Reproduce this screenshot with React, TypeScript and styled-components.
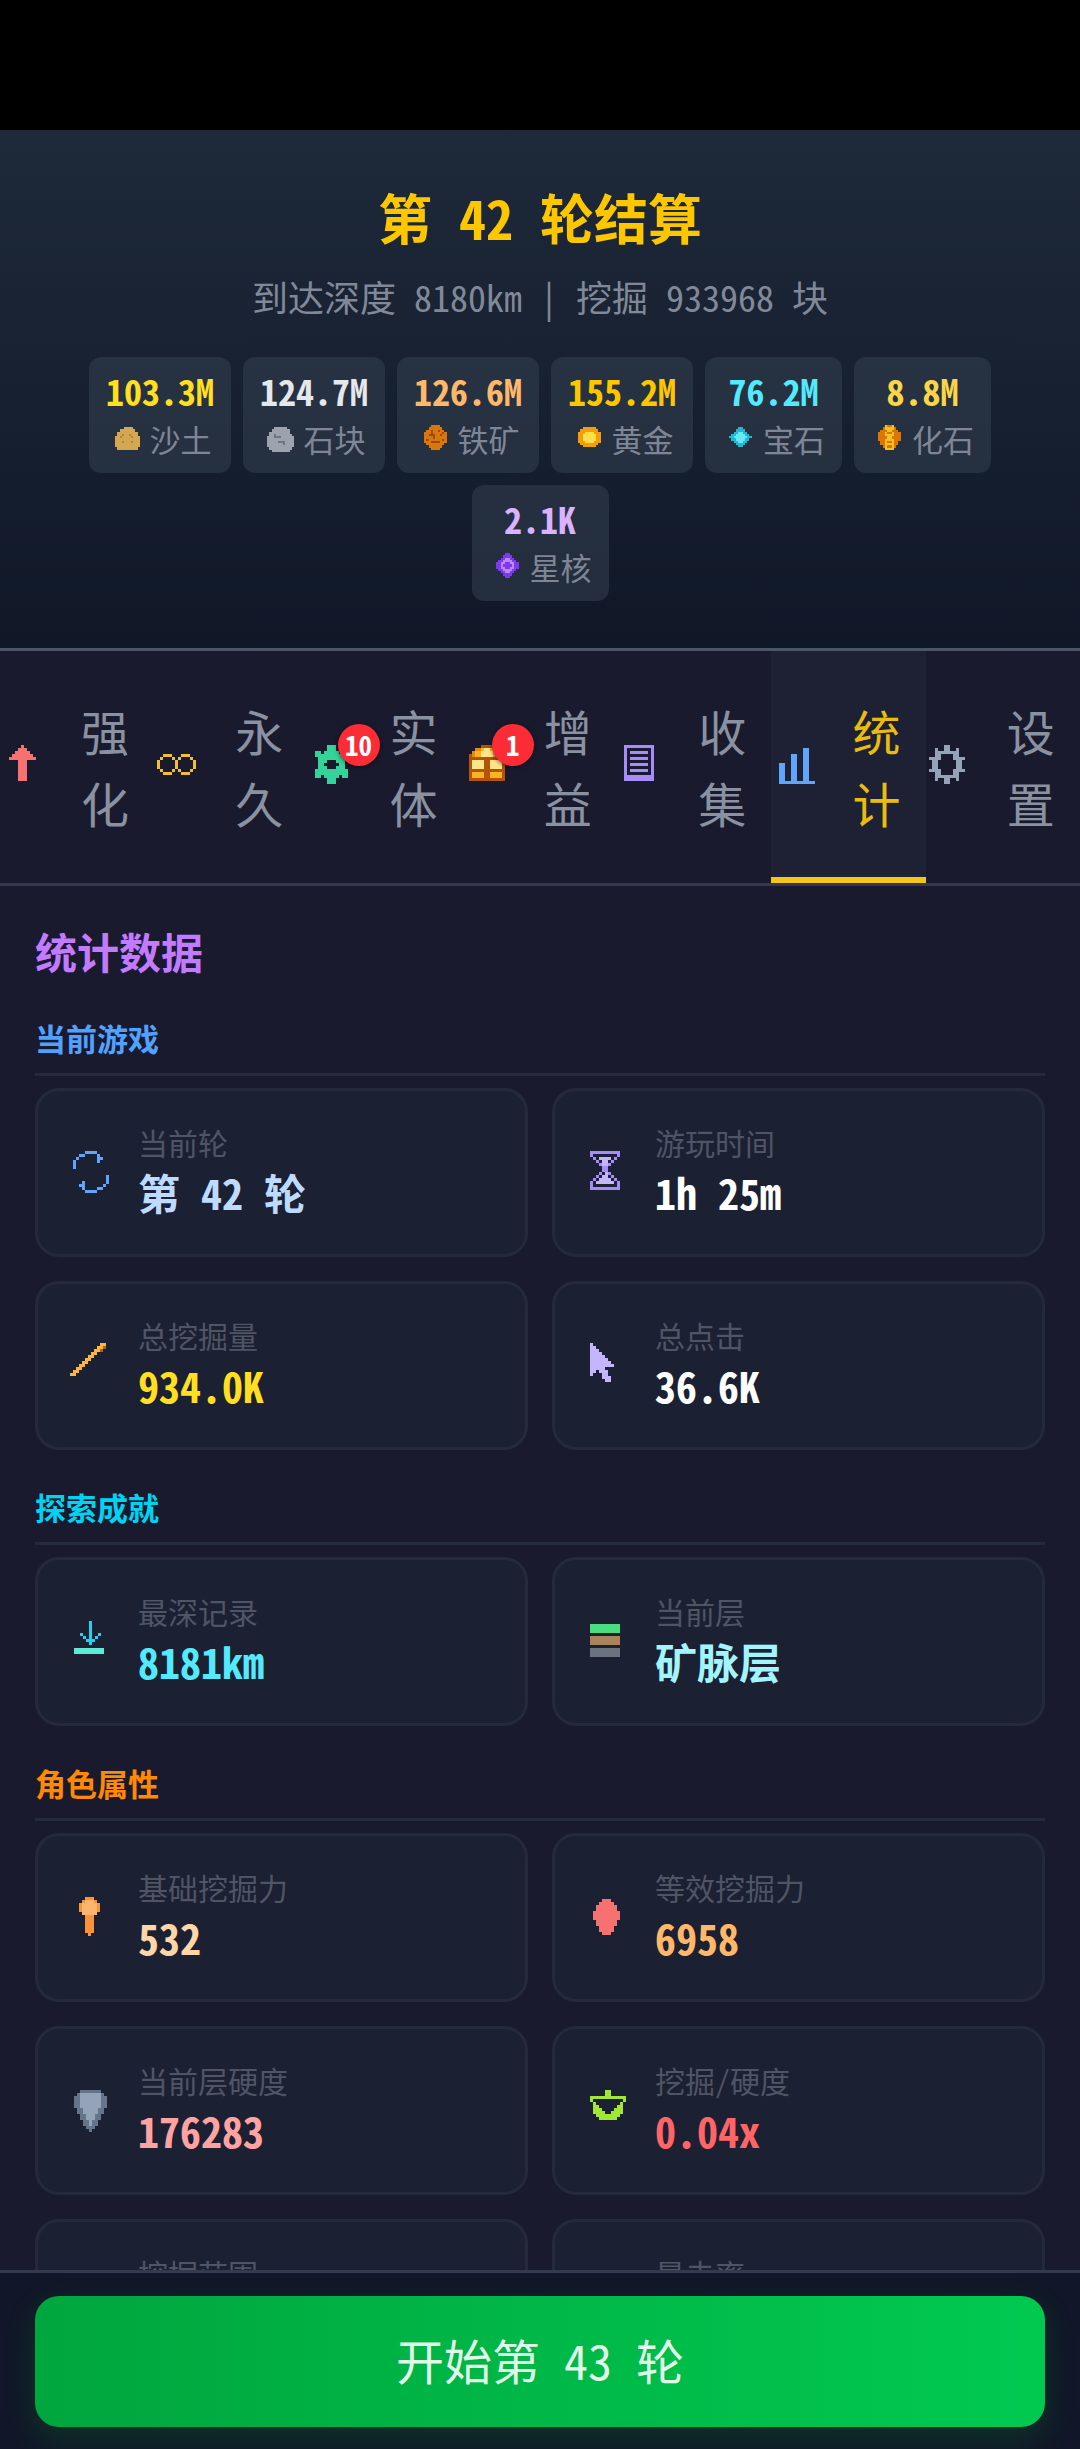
import React, { useState } from "react";
import styled, { createGlobalStyle } from "styled-components";

const GlobalStyle = createGlobalStyle`
  * { box-sizing: border-box; }
  body { margin: 0; background: #1a1a2e; }
  body, button {
    font-family: "Noto Sans Mono CJK SC", "Noto Sans CJK SC", monospace;
  }
`;

/* ---------- pixel art ---------- */

type Palette = Record<string, string>;

interface Art {
  rows: string[];
  colors: Palette;
  x: number;
  y: number;
}

const PixelSvg = styled.svg`
  display: block;
  flex: none;
`;

function PixelIcon({ art, size, cell = 3 }: { art: Art; size: number; cell?: number }) {
  const runs: React.ReactNode[] = [];
  art.rows.forEach((row, r) => {
    let c = 0;
    while (c < row.length) {
      const key = row[c];
      let end = c + 1;
      while (end < row.length && row[end] === key) end += 1;
      if (key !== ".") {
        runs.push(
          <rect
            key={`${r}-${c}`}
            x={art.x + c * cell}
            y={art.y + r * cell}
            width={(end - c) * cell}
            height={cell}
            fill={art.colors[key]}
          />
        );
      }
      c = end;
    }
  });
  return (
    <PixelSvg width={size} height={size} viewBox={`0 0 ${size} ${size}`} shapeRendering="crispEdges" aria-hidden="true">
      {runs}
    </PixelSvg>
  );
}

const arrowUp: Art = {
  x: 9, y: 1, colors: { X: "#f87171" },
  rows: [
    "....X....", "...XXX...", "..XXXXX..", ".XXXXXXX.", "XXXXXXXXX",
    "...XXX...", "...XXX...", "...XXX...", "...XXX...", "...XXX...", "...XXX...", "...XXX...",
  ],
};
const infinity: Art = {
  x: 3, y: 10, colors: { X: "#f3bd38" },
  rows: [
    "..XXX...XXX..", ".X...X.X...X.", "X.....X.....X", "X.....X.....X",
    "X.....X.....X", ".X...X.X...X.", "..XXX...XXX..",
  ],
};
const greenGear: Art = {
  x: 6, y: 1, colors: { X: "#34d399" },
  rows: [
    "....XXX....", "....XXX....", "XX.XXXXX.XX", "XXXXXXXXXXX", ".XXXXXXXXX.", ".XXX...XXX.",
    ".XX.....XX.", ".XXX...XXX.", "XXXXXXXXXXX", "XXXXXXXXXXX", "XX.XXXXX.XX", "....XXX....", "....XXX....",
  ],
};
const gift: Art = {
  x: 6, y: 1, colors: { D: "#b45309", A: "#fbb324", L: "#fde68a", O: "#e58a10" },
  rows: [
    "....DDDD....", "..OOALLAOO..", ".OAALLLLAAO.", "DOAALLLLAAOD", "DDDDDDDDDDDD", "DLLLLDDLLLLD",
    "DLLLLDDLLLLD", "DLLLLDDLLLLD", "DDDDDDDDDDDD", "DAAAADDAAAAD", "DAAAADDAAAAD", "DDDDDDDDDDDD",
  ],
};
const notebook: Art = {
  x: 7, y: 1, colors: { X: "#a78bfa" },
  rows: [
    "XXXXXXXXXX", "X........X", "X.XXXXXX.X", "X........X", "X.XXXXXX.X", "X........X",
    "X.XXXXXX.X", "X........X", "X.XXXXXX.X", "X........X", "XXXXXXXXXX", "XXXXXXXXXX",
  ],
};
const bars: Art = {
  x: 8, y: 4, colors: { X: "#60a5fa" },
  rows: [
    "........XX..", "........XX..", "....XX..XX..", "....XX..XX..", "....XX..XX..", "XX..XX..XX..",
    "XX..XX..XX..", "XX..XX..XX..", "XX..XX..XX..", "XX..XX..XX..", "XX..XX..XX..", "XXXXXXXXXXXX",
  ],
};
const settings: Art = {
  x: 3, y: 1, colors: { X: "#94a3b8" },
  rows: [
    ".....XX.....", "..X..XX..X..", "..XXXXXXXX..", "..XX....XX..", "XXXX....XXXX", ".XX......XX.", ".XX......XX.",
    ".XX......XX.", "XXXX....XXXX", "..XX....XX..", "..XXXXXXXX..", "..X..XX..X..", ".....XX.....",
  ],
};

const sand: Art = {
  x: 6, y: 6, colors: { X: "#d4a853", D: "#b08433" },
  rows: [
    "....XXXX...", "..XXXXXXX..", ".XXXXXXXXX.", ".XXDXXDXXX.", "XXDXXXXDXXX",
    "XXXXXXXXXXX", "XXXDXXXDXXX", "XXXXXXXXXXX", "XXXXXXXXXXX", ".XXXXXXXXX.",
  ],
};
const stone: Art = {
  x: 4, y: 6, colors: { X: "#9ca3af", D: "#6f7683" },
  rows: [
    "...XXXXXX...", "..XXXXXXXX..", ".XXXXXXXXX..", ".XXDXXXXXXX.", "XXXDDDXXXXXX", "XXXXXXXXXXXX",
    "XXXXXDDDXXXX", "XXXXXXXDXXXX", "XXXXXXXXXXXX", ".XXXXXXXXXX.", "..XXXXXXXX..",
  ],
};
const iron: Art = {
  x: 7, y: 4, colors: { X: "#d9770a", D: "#994a0c" },
  rows: [
    "...XXXX...", "..XXXXXX..", ".XXDXXDXX.", "XXXDXXXXDX", "XXDDDXXDXX", "XXXXDXXXXX",
    "XDXXXXXXDX", "XXXDDDDXXX", ".XXXXXXXX.", "..XXXXXX..", "...XXXX...",
  ],
};
const gold: Art = {
  x: 7, y: 6, colors: { X: "#f59e0b", L: "#fde047" },
  rows: [
    "..XXXXXX..", ".XXXXXXXX.", "XXXLLLLXXX", "XXLLLLLLXX", "XXLLLLLLXX", "XXLLLLLLXX", "XXXLLLLXXX", ".XXXXXXXX.", "..XXXXXX..",
  ],
};
const gem: Art = {
  x: 7, y: 6, colors: { X: "#22b8d0", L: "#67e8f9" },
  rows: [
    "....XX....", "...XXXX...", "..XXLLXX..", ".XXLLLLXX.", "XXLLLLLLXX", ".XXLLLLXX.", "..XXLLXX..", "...XXXX...", "....XX....",
  ],
};
const fossil: Art = {
  x: 7, y: 4, colors: { X: "#d97706", L: "#fbbf24" },
  rows: [
    "...LXXL...", "..XLLLLX..", ".XXXLLXXX.", "XXXLXXLXXX", "XXXLLLLXXX", "XXXXLLXXXX",
    "XXXLLLLXXX", ".XXLXXLXX.", ".XXLLLLXX.", "..XLXXLX..", "...LLLL...",
  ],
};
const star: Art = {
  x: 7, y: 4, colors: { X: "#7c3aed", L: "#c084fc" },
  rows: [
    "....XX....", "...XXXX...", "..XXLLXX..", ".XXLLLLXX.", "XXLLXXLLXX", "XXLXXXXLXX",
    "XXLLXXLLXX", ".XXLLLLXX.", "..XXLLXX..", "...XXXX...", "....XX....",
  ],
};

const refresh: Art = {
  x: 7, y: 3, colors: { X: "#60a5fa" },
  rows: [
    "....XXXX....", "..XX....X...", ".X......XX..", "X.......X...", "X...........", "X...........", "............",
    "............", "...........X", "...........X", "...X.......X", "..XX......X.", "...X....XX..", "....XXXX....",
  ],
};
const hourglass: Art = {
  x: 7, y: 3, colors: { P: "#a78bfa", L: "#c4b5fd" },
  rows: [
    "PPPPPPPPPP", "P........P", ".P.LLLL.P.", "..P.LL.P..", "...PLLP...", "....PP....", "....PP....",
    "...P.LP...", "..P.LL.P..", ".P.LLLL.P.", "P.LLLLLL.P", "P........P", "PPPPPPPPPP",
  ],
};
const pickaxe: Art = {
  x: 4, y: 2, colors: { X: "#fbb540", D: "#a9641c" },
  rows: [
    "..........XX", ".........XXD", "........XXD.", ".......XX...", "......XX....", ".....XX.....",
    "....XX......", "...XX.......", "..XX........", ".XX.........", "XX..........",
  ],
};
const cursor: Art = {
  x: 7, y: 2, colors: { X: "#c4b5fd" },
  rows: [
    "X", "XX", "XXX", "XXXX", "XXXXX", "XXXXXX", "XXXXXXX", "XXXXXXXX", "XXXXX", "XX.XXX", "X...XX", "....XXX", ".....XX",
  ],
};
const depth: Art = {
  x: 8, y: 4, colors: { X: "#22d3ee", T: "#5eead4" },
  rows: [
    ".....X....", ".....X....", ".....X....", ".....X....", "..X..X..X.", "...X.X.X..",
    "....XXX...", ".....X....", "..........", "TTTTTTTTTT", "TTTTTTTTTT",
  ],
};
const layers: Art = {
  x: 7, y: 7, colors: { G: "#4ade80", B: "#a9835a", S: "#6b7280" },
  rows: [
    "GGGGGGGGGG", "GGGGGGGGGG", "GGGGGGGGGG", "..........", "BBBBBBBBBB", "BBBBBBBBBB",
    "BBBBBBBBBB", "..........", "SSSSSSSSSS", "SSSSSSSSSS", "SSSSSSSSSS",
  ],
};
const hammer: Art = {
  x: 13, y: 4, colors: { O: "#fb923c", L: "#fdb56e" },
  rows: [
    "..OOO..", ".OLLLO.", "OLLLLLO", "OLLLLLO", "OLLLLLO", ".LLLLL.", "..OOO..",
    "..OOO..", "..OOO..", "..OOO..", "..OOO..", "..OOO..", "...O...",
  ],
};
const fist: Art = {
  x: 10, y: 6, colors: { X: "#f87171" },
  rows: [
    "...XXX...", "..XXXXX..", ".XXXXXXX.", ".XXXXXXX.", "XXXXXXXXX", "XXXXXXXXX",
    "XXXXXXXXX", ".XXXXXXX.", ".XXXXXXX.", "..XXXXX..", "..XXXXX..", "...XXX...",
  ],
};
const shield: Art = {
  x: 8, y: 4, colors: { D: "#64748b", L: "#94a3b8" },
  rows: [
    "..DDDDDDD..", ".DLLLLLLLD.", "DDLLLLLLLDD", "DDLLLLLLLDD", "DDLLLLLLLDD", "DDLLLLLLLDD", ".DDLLLLLDD.",
    ".DDLLLLLDD.", "..DDLLLDD..", "..DDLLLDD..", "...DDLDD...", "...DDLDD...", "....DDD....", ".....D.....",
  ],
};
const scale: Art = {
  x: 7, y: 4, colors: { X: "#a3e635" },
  rows: [
    ".....XX.....", ".....XX.....", "XXXXXXXXXXXX", "X..........X", ".X........X.",
    ".XX......XX.", ".XXX....XXX.", ".XXXX..XXXX.", "..XXXXXXXX..", "...XXXXXX...",
  ],
};
const blank: Art = { x: 0, y: 0, colors: {}, rows: [] };

/* ---------- layout ---------- */

const Screen = styled.div`
  display: flex;
  flex-direction: column;
  height: 100vh;
  background: #1a1a2e;
`;

const StatusBar = styled.div`
  flex: none;
  height: 130px;
  background: #000;
`;

const Header = styled.header`
  flex: none;
  display: flex;
  flex-direction: column;
  align-items: center;
  padding: 46px 35px 47px;
  background: linear-gradient(to bottom, #1e2939, #101828);
  border-bottom: 3px solid #4a5565;
`;

const Title = styled.h1`
  margin: 0;
  font-size: 54px;
  line-height: 81px;
  font-weight: 700;
  color: #fdc700;
`;

const Summary = styled.p`
  margin: 12px 0 34px;
  font-size: 36px;
  line-height: 54px;
  color: #818998;
`;

const Chips = styled.ul`
  display: flex;
  flex-wrap: wrap;
  justify-content: center;
  gap: 12px;
  margin: 0;
  padding: 0;
  list-style: none;
`;

const Chip = styled.li`
  display: flex;
  flex-direction: column;
  align-items: center;
  padding: 6px 17px 12px;
  border-radius: 12px;
  background: rgba(54, 65, 83, 0.5);
`;

const ChipValue = styled.span<{ $color: string }>`
  font-size: 36px;
  line-height: 54px;
  font-weight: 700;
  color: ${(p) => p.$color};
`;

const ChipLabel = styled.span`
  display: flex;
  align-items: center;
  gap: 5px;
  font-size: 31px;
  line-height: 44px;
  color: #7e8695;
`;

const Tabs = styled.nav`
  flex: none;
  display: flex;
  border-bottom: 3px solid #33384e;
`;

const Tab = styled.button<{ $active: boolean }>`
  flex: 1 1 0;
  min-width: 0;
  display: flex;
  align-items: center;
  gap: 36px;
  padding: 43px 0 ${(p) => (p.$active ? 39 : 45)}px;
  border: 0;
  border-bottom: ${(p) => (p.$active ? "6px solid #f5c518" : "0")};
  background: ${(p) => (p.$active ? "#1d2133" : "transparent")};
  color: ${(p) => (p.$active ? "#e9bd10" : "#8a91a0")};
  font-size: 48px;
  line-height: 72px;
  cursor: pointer;
`;

const TabIcon = styled.span`
  position: relative;
  flex: none;
`;

const TabLabel = styled.span`
  flex: none;
  width: 1em;
  word-break: break-all;
`;

const Badge = styled.span`
  position: absolute;
  top: -20px;
  right: -26px;
  min-width: 42px;
  height: 42px;
  border-radius: 21px;
  background: #fb2c36;
  color: #fff;
  font-size: 27px;
  line-height: 42px;
  font-weight: 700;
  text-align: center;
  box-shadow: 0 1px 4px rgba(0, 0, 0, 0.6);
`;

const Panel = styled.main`
  flex: 1 1 0;
  min-height: 0;
  overflow-y: auto;
  scrollbar-width: none;
  padding: 33px 35px;
`;

const PanelTitle = styled.h2`
  margin: 0 0 32px;
  font-size: 42px;
  line-height: 63px;
  font-weight: 700;
  color: #c27aff;
`;

const Section = styled.section`
  margin-bottom: 33px;
`;

const SectionTitle = styled.h3<{ $color: string }>`
  margin: 0 0 12px;
  padding-bottom: 11px;
  border-bottom: 3px solid #262a3d;
  font-size: 31px;
  line-height: 48px;
  font-weight: 700;
  color: ${(p) => p.$color};
`;

const Grid = styled.div`
  display: grid;
  grid-template-columns: repeat(2, minmax(0, 1fr));
  gap: 24px;
`;

const Card = styled.article`
  display: flex;
  align-items: center;
  gap: 24px;
  padding: 31px 28px 32px;
  border: 3px solid #25293c;
  border-radius: 24px;
  background: #1c2033;
`;

const Label = styled.div`
  font-size: 30px;
  line-height: 40px;
  color: #4f5564;
`;

const Value = styled.div<{ $color: string }>`
  min-height: 60px;
  font-size: 42px;
  line-height: 60px;
  font-weight: 700;
  color: ${(p) => p.$color};
`;

const Footer = styled.footer`
  flex: none;
  overflow: hidden;
  padding: 23px 35px 22px;
  border-top: 3px solid #343b4e;
  background: #111728;
`;

const StartButton = styled.button`
  display: block;
  width: 100%;
  padding: 27px 0 32px;
  border: 0;
  border-radius: 24px;
  background: linear-gradient(to right, #00a63e, #00c950);
  box-shadow: 0 12px 30px rgba(0, 166, 62, 0.2);
  color: #e2f9ea;
  font-size: 48px;
  line-height: 72px;
  cursor: pointer;
`;

/* ---------- data ---------- */

const resources = [
  { name: "沙土", value: "103.3M", color: "#ffdf20", art: sand },
  { name: "石块", value: "124.7M", color: "#e5e7eb", art: stone },
  { name: "铁矿", value: "126.6M", color: "#ffb86a", art: iron },
  { name: "黄金", value: "155.2M", color: "#fdc700", art: gold },
  { name: "宝石", value: "76.2M", color: "#53eafd", art: gem },
  { name: "化石", value: "8.8M", color: "#f9d648", art: fossil },
  { name: "星核", value: "2.1K", color: "#dab2ff", art: star },
];

const tabs: { name: string; art: Art; badge?: number }[] = [
  { name: "强化", art: arrowUp },
  { name: "永久", art: infinity },
  { name: "实体", art: greenGear, badge: 10 },
  { name: "增益", art: gift, badge: 1 },
  { name: "收集", art: notebook },
  { name: "统计", art: bars },
  { name: "设置", art: settings },
];

const sections: {
  title: string;
  color: string;
  stats: { label: string; value?: string; color: string; art: Art }[];
}[] = [
  {
    title: "当前游戏",
    color: "#51a2ff",
    stats: [
      { label: "当前轮", value: "第 42 轮", color: "#bedbff", art: refresh },
      { label: "游玩时间", value: "1h 25m", color: "#ffffff", art: hourglass },
      { label: "总挖掘量", value: "934.0K", color: "#ffdf20", art: pickaxe },
      { label: "总点击", value: "36.6K", color: "#ffffff", art: cursor },
    ],
  },
  {
    title: "探索成就",
    color: "#00d3f2",
    stats: [
      { label: "最深记录", value: "8181km", color: "#53eafd", art: depth },
      { label: "当前层", value: "矿脉层", color: "#a2f4fd", art: layers },
    ],
  },
  {
    title: "角色属性",
    color: "#ff8904",
    stats: [
      { label: "基础挖掘力", value: "532", color: "#ffd6a8", art: hammer },
      { label: "等效挖掘力", value: "6958", color: "#ffb86a", art: fist },
      { label: "当前层硬度", value: "176283", color: "#ffa2a2", art: shield },
      { label: "挖掘/硬度", value: "0.04x", color: "#ff6467", art: scale },
      { label: "挖掘范围", color: "#ffffff", art: blank },
      { label: "暴击率", color: "#ffffff", art: blank },
    ],
  },
];

export default function App() {
  const [active, setActive] = useState("统计");
  return (
    <>
      <GlobalStyle />
      <Screen>
        <StatusBar />
        <Header>
          <Title>第 42 轮结算</Title>
          <Summary>到达深度 8180km | 挖掘 933968 块</Summary>
          <Chips>
            {resources.map((r) => (
              <Chip key={r.name}>
                <ChipValue $color={r.color}>{r.value}</ChipValue>
                <ChipLabel>
                  <PixelIcon art={r.art} size={36} cell={2.25} />
                  {r.name}
                </ChipLabel>
              </Chip>
            ))}
          </Chips>
        </Header>
        <Tabs>
          {tabs.map((t) => (
            <Tab
              key={t.name}
              type="button"
              $active={t.name === active}
              aria-current={t.name === active ? "page" : undefined}
              onClick={() => setActive(t.name)}
            >
              <TabIcon>
                <PixelIcon art={t.art} size={45} />
                {t.badge !== undefined && <Badge>{t.badge}</Badge>}
              </TabIcon>
              <TabLabel>{t.name}</TabLabel>
            </Tab>
          ))}
        </Tabs>
        <Panel>
          <PanelTitle>统计数据</PanelTitle>
          {sections.map((s) => (
            <Section key={s.title}>
              <SectionTitle $color={s.color}>{s.title}</SectionTitle>
              <Grid>
                {s.stats.map((stat) => (
                  <Card key={stat.label}>
                    <PixelIcon art={stat.art} size={48} />
                    <div>
                      <Label>{stat.label}</Label>
                      <Value $color={stat.color}>{stat.value}</Value>
                    </div>
                  </Card>
                ))}
              </Grid>
            </Section>
          ))}
        </Panel>
        <Footer>
          <StartButton type="button">开始第 43 轮</StartButton>
        </Footer>
      </Screen>
    </>
  );
}
